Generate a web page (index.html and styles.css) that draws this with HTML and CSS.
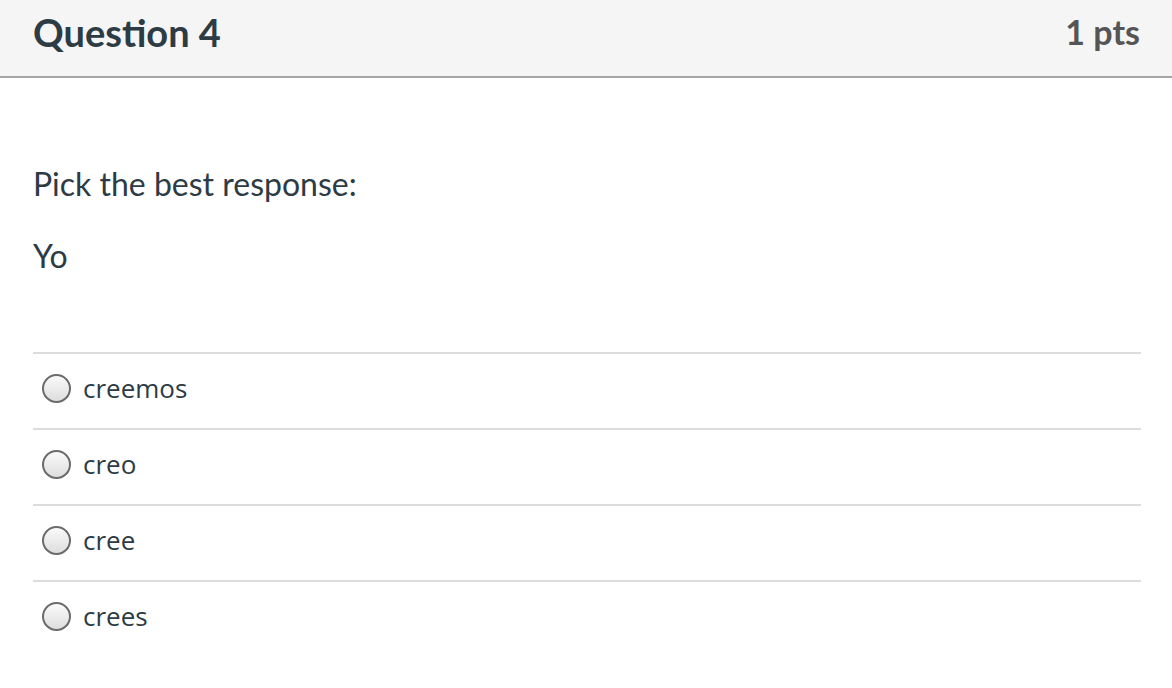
FILE: index.html
```html
<!DOCTYPE html>
<html>
<head>
<meta charset="utf-8">
<link rel="stylesheet" href="styles.css">
</head>
<body>
<div class="question">
  <div class="header">
    <h2 class="title">Question 4</h2>
    <div class="pts">1 pts</div>
  </div>
  <div class="content">
    <p class="text">Pick the best response:</p>
    <p class="text">Yo</p>
    <div class="answers">
      <label class="answer"><span class="radio"></span><span class="label">creemos</span></label>
      <label class="answer"><span class="radio"></span><span class="label">creo</span></label>
      <label class="answer"><span class="radio"></span><span class="label">cree</span></label>
      <label class="answer"><span class="radio"></span><span class="label">crees</span></label>
    </div>
  </div>
</div>
</body>
</html>
```

FILE: styles.css
```css
html, body {
  margin: 0;
  padding: 0;
  background: #fff;
}
.question {
  width: 1172px;
  height: 688px;
  overflow: hidden;
}
.header {
  background: #f5f5f5;
  border-bottom: 2px solid #a5a5a5;
  display: flex;
  align-items: center;
  justify-content: space-between;
  padding: 0 32px 0 33px;
  box-sizing: border-box;
  height: 78px;
}
.title {
  margin: 0;
  font-family: "Lato", sans-serif;
  font-weight: 700;
  font-size: 38px;
  color: #2d3b45;
  padding-bottom: 13px;
}
.pts {
  font-family: "Lato", sans-serif;
  font-weight: 700;
  font-size: 34px;
  color: #555;
  padding-bottom: 13px;
}
.content {
  padding: 0 31px 0 33px;
}
.text {
  font-family: "Lato", sans-serif;
  font-size: 32px;
  color: #2d3b45;
  margin: 0;
  line-height: 36px;
}
.text:first-child {
  margin-top: 88px;
}
.text + .text {
  margin-top: 36px;
}
.answers {
  margin-top: 78px;
}
.answer {
  display: flex;
  align-items: center;
  height: 68px;
  padding-bottom: 6px;
  border-top: 2px solid #dcdcdc;
  gap: 12px;
  padding-left: 9px;
}
.radio {
  width: 25px;
  height: 25px;
  border-radius: 50%;
  border: 2px solid #6b6b6b;
  background: linear-gradient(#fafafa, #dedede);
  flex: none;
}
.label {
  font-family: "Open Sans", sans-serif;
  font-size: 26px;
  color: #2d3b45;
}
```
